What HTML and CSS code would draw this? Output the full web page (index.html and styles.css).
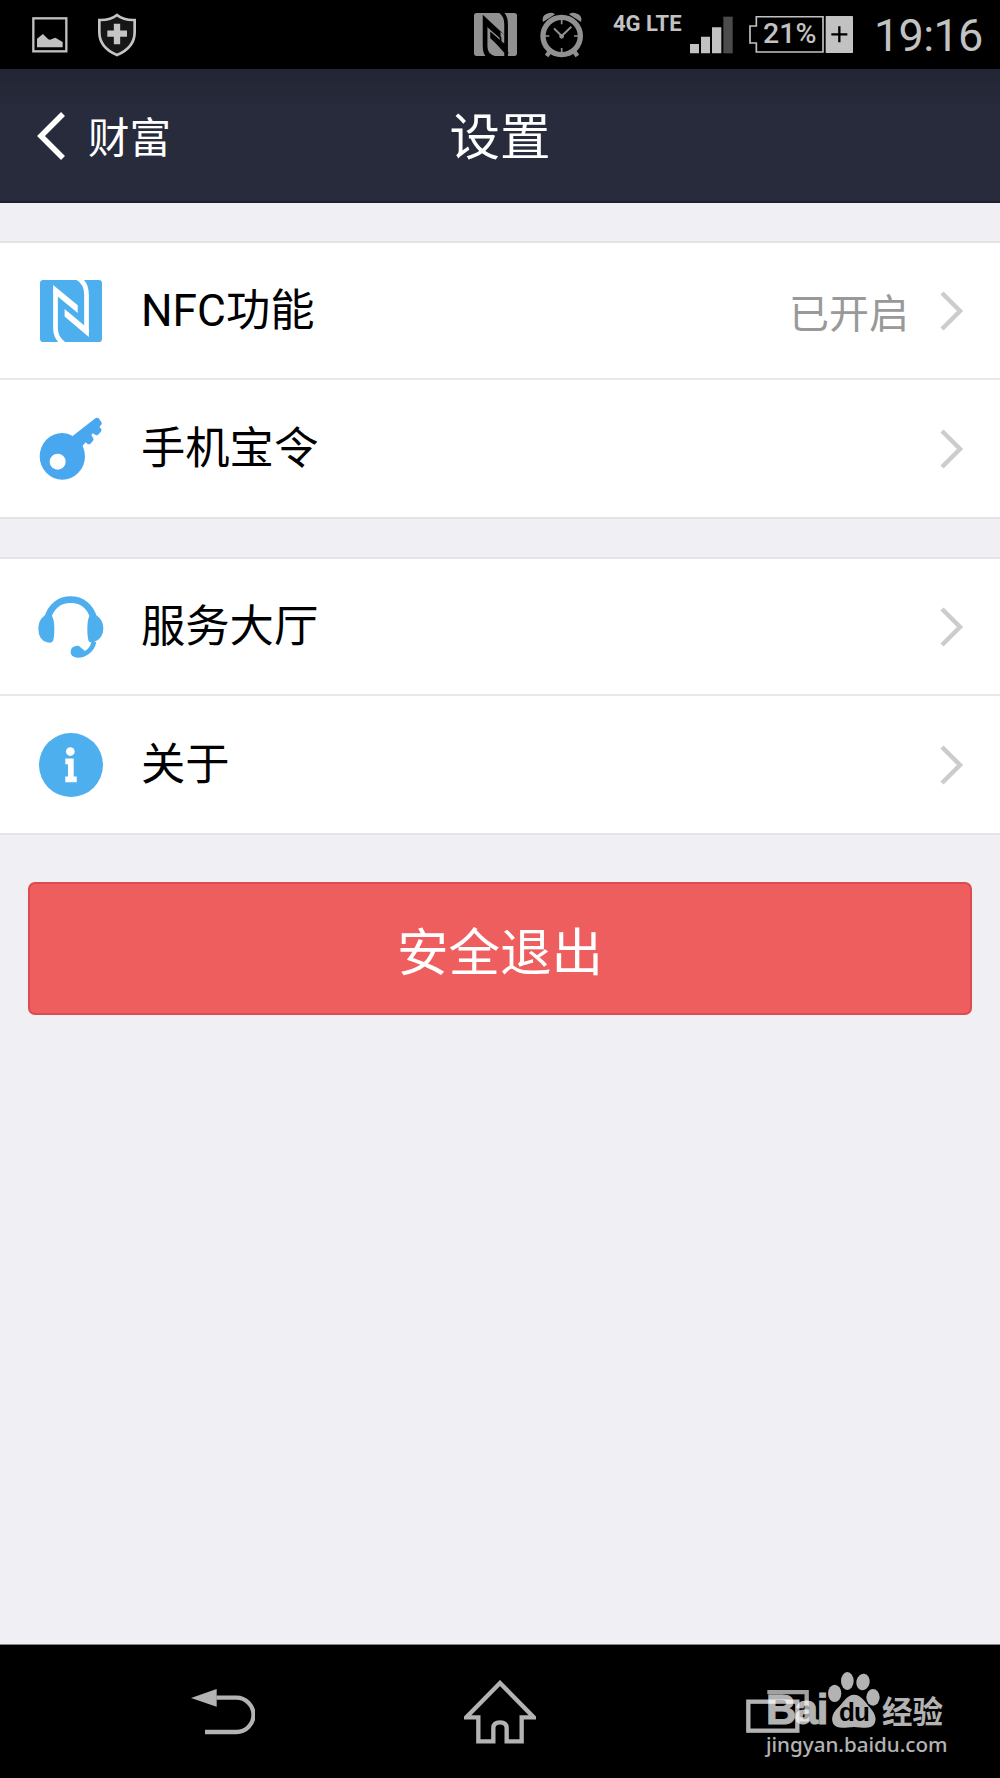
FILE: index.html
```html
<!DOCTYPE html>
<html lang="zh-CN">
<head>
  <meta charset="UTF-8" />
  <meta name="viewport" content="width=device-width, initial-scale=1" />
  <title>设置</title>
  <link rel="stylesheet" href="styles.css">
</head>
<body>

  <div class="status-bar">
    <svg class="icon-picture" width="36" height="36" viewBox="0 0 108 108">
      <rect x="4" y="4" width="99" height="99" fill="none" stroke="#c0c0c0" stroke-width="7"/>
      <path d="M15 91V65L33 51L48 66Q53 71 60 66L70 62L92 75V91Z" fill="#c0c0c0"/>
    </svg>
    <svg class="icon-shield" width="38" height="44" viewBox="0 0 114 132">
      <path d="M57 6Q38 22 4 21V57C4 88 23 112 57 126C91 112 110 88 110 57V21Q76 22 57 6Z" fill="#161616" stroke="#c5c5c5" stroke-width="8"/>
      <path d="M57 32V94M28 62H87" stroke="#c5c5c5" stroke-width="19"/>
    </svg>
    <svg class="icon-nfc-small" width="43" height="43" viewBox="0 0 128 128">
      <path d="M8 0H75Q90 10 90 34V65L26 5V98Q26 118 34 128H8Q0 128 0 120V8Q0 0 8 0Z" fill="#919191"/>
      <path d="M95 0H120Q128 0 128 8V120Q128 128 120 128H101V34Q101 12 91 0Z" fill="#919191"/>
      <path d="M40 39L79 73V56L90 65V91L50 57V74L90 118V128H62Q40 122 40 100Z" fill="#919191"/>
      <path d="M40 39L79 73V88L51 61V74L102 120" fill="none" stroke="#000" stroke-width="5"/>
    </svg>
    <svg class="icon-alarm" width="44" height="46" viewBox="0 0 132 138">
      <path d="M9 30Q3 8 27 3Q40 0 45 7ZM123 30Q129 8 105 3Q92 0 87 7Z" fill="#919191"/>
      <path d="M30 117L20 132M102 117L112 132" stroke="#919191" stroke-width="13"/>
      <circle cx="65" cy="72" r="60" fill="#000"/>
      <circle cx="65" cy="72" r="56" fill="none" stroke="#919191" stroke-width="16"/>
      <path d="M65 24V37M65 108V121M14 72H28M102 72H116" stroke="#919191" stroke-width="5"/>
      <path d="M42 49L65 72L94 44" fill="none" stroke="#919191" stroke-width="6"/>
      <circle cx="65" cy="73" r="7" fill="#919191"/>
    </svg>
    <span class="network">4G LTE</span>
    <svg class="icon-signal" width="43" height="38" viewBox="0 0 129 114">
      <path d="M0 84H27V112H0ZM33 62H60V112H33ZM66 34H94V112H66Z" fill="#c2c2c2"/>
      <rect x="100" y="2" width="28" height="110" fill="#4b4b4b"/>
    </svg>
    <div class="battery">
      <svg width="104" height="37" viewBox="0 0 312 111">
        <path d="M22 2H222V108H22V81H3V30H22Z" fill="none" stroke="#c2c2c2" stroke-width="5"/>
        <rect x="230" y="0" width="82" height="111" rx="2" fill="#c2c2c2"/>
        <path d="M271 31V79M247 55H295" stroke="#000" stroke-width="7"/>
      </svg>
      <span class="battery-level">21%</span>
    </div>
    <span class="clock">19:16</span>
  </div>

  <header class="header">
    <a class="back">
      <svg width="29" height="48" viewBox="0 0 29 48">
        <path d="M27 2L5 24L27 46" fill="none" stroke="#fff" stroke-width="5.6"/>
      </svg>
      <span>财富</span>
    </a>
    <h1>设置</h1>
  </header>

  <main class="content">
    <div class="list">
      <div class="row">
        <div class="row-icon">
          <svg width="62" height="62" viewBox="0 0 184 184">
            <rect width="184" height="184" rx="10" fill="#4dafee"/>
            <path d="M112 -6Q138 8 138 44V156" fill="none" stroke="#fff" stroke-width="14"/>
            <path d="M71 190Q46 172 46 144V30" fill="none" stroke="#fff" stroke-width="14"/>
            <path d="M39 15L112 75V98L39 38ZM73 86L145 146V169L73 108Z" fill="#fff"/>
          </svg>
        </div>
        <span class="label">NFC功能</span>
        <span class="value">已开启</span>
        <svg class="arrow" width="24" height="42" viewBox="0 0 24 42"><path d="M2 3L20 21L2 39"/></svg>
      </div>
      <div class="row">
        <div class="row-icon">
          <svg width="64" height="64" viewBox="0 0 192 192">
            <path d="M101 57L169 4Q174 0 179 4L187 15Q190 19 187 23L181 29L187 37Q189 41 185 45L177 53Q173 56 169 53L161 49L157 55L163 64Q165 69 161 73L154 80Q149 84 145 80L140 76L131 86Q138 103 138 118A68 70 0 1 1 70 48Q87 48 101 57Z" fill="#49a7f0"/>
            <circle cx="56" cy="134" r="24" fill="#fff"/>
          </svg>
        </div>
        <span class="label">手机宝令</span>
        <svg class="arrow" width="24" height="42" viewBox="0 0 24 42"><path d="M2 3L20 21L2 39"/></svg>
      </div>
    </div>

    <div class="list">
      <div class="row">
        <div class="row-icon">
          <svg width="66" height="62" viewBox="0 0 196 186">
            <path d="M27 68C38 30 65 11 97 11C129 11 156 30 167 68" fill="none" stroke="#4dafee" stroke-width="20"/>
            <path d="M20 58L40 58Q48 72 48 98Q48 124 44 135Q40 142 26 139Q0 132 0 97Q0 72 20 58Z" fill="#4dafee"/>
            <path d="M174 58L154 58Q147 72 147 98Q147 124 151 135Q155 142 167 138Q195 128 195 97Q195 72 174 58Z" fill="#4dafee"/>
            <path d="M159 138H174C168 169 142 186 117 185C98 184 93 170 100 157Q106 148 121 149L140 165Q155 157 159 138Z" fill="#4dafee"/>
          </svg>
        </div>
        <span class="label">服务大厅</span>
        <svg class="arrow" width="24" height="42" viewBox="0 0 24 42"><path d="M2 3L20 21L2 39"/></svg>
      </div>
      <div class="row">
        <div class="row-icon">
          <svg width="64" height="64" viewBox="0 0 190 190">
            <circle cx="95" cy="95" r="95" fill="#4dafee"/>
            <circle cx="93" cy="55" r="13" fill="#fff"/>
            <path d="M78 76H103V129H112V146H78V129H86V93H78Z" fill="#fff"/>
          </svg>
        </div>
        <span class="label">关于</span>
        <svg class="arrow" width="24" height="42" viewBox="0 0 24 42"><path d="M2 3L20 21L2 39"/></svg>
      </div>
    </div>

    <button class="btn-logout">安全退出</button>
  </main>

  <nav class="nav-bar">
    <svg class="nav-back" width="64" height="46" viewBox="0 0 192 138">
      <path d="M76 26H136A51 51 0 0 1 136 129H42" fill="none" stroke="#b3b3b3" stroke-width="13"/>
      <path d="M0 27L77 0V53Z" fill="#b3b3b3"/>
    </svg>
    <svg class="nav-home" width="72" height="64" viewBox="0 0 216 192">
      <path d="M108 9L7 112H43V184H88V144Q88 127 108 127Q128 127 128 144V184H173V112H209Z" fill="none" stroke="#b3b3b3" stroke-width="13"/>
    </svg>
    <svg class="nav-recent" width="64" height="43" viewBox="0 0 192 129">
      <path d="M64 6H182V88H160" fill="none" stroke="#a0a0a0" stroke-width="13"/>
      <rect x="7" y="35" width="147" height="87" fill="none" stroke="#b3b3b3" stroke-width="13"/>
    </svg>

    <div class="watermark">
      <div class="watermark-logo">
        <span class="wm-bai">Bai</span>
        <div class="paw">
          <svg width="52" height="57" viewBox="0 0 156 171">
            <ellipse cx="20" cy="64" rx="20" ry="26"/>
            <ellipse cx="58" cy="27" rx="19" ry="27"/>
            <ellipse cx="105" cy="30" rx="20" ry="25" transform="rotate(10 105 30)"/>
            <ellipse cx="135" cy="76" rx="20" ry="25"/>
            <path d="M78 68C98 68 108 86 124 104C140 122 148 139 139 156C129 173 104 166 78 165C52 166 27 173 16 156C7 139 15 120 32 105C48 88 58 68 78 68Z"/>
          </svg>
          <span class="wm-du">du</span>
        </div>
        <span class="wm-cn">经验</span>
      </div>
      <div class="wm-url">jingyan.baidu.com</div>
    </div>
  </nav>

</body>
</html>
```
FILE: styles.css
```css
* {
  box-sizing: border-box;
}

body {
  margin: 0;
  height: 1778px;
  display: flex;
  flex-direction: column;
  background: #efeff4;
  color: #000;
  font-family: Roboto, "Noto Sans CJK SC", sans-serif;
  overflow: hidden;
}

svg {
  display: block;
  flex-shrink: 0;
}

/* status bar */
.status-bar {
  height: 69px;
  flex-shrink: 0;
  display: flex;
  align-items: flex-start;
  padding-left: 32px;
  background: #000;
  color: #c2c2c2;
}

.icon-picture {
  margin-top: 17px;
}

.icon-shield {
  margin: 13px 0 0 30px;
}

.icon-nfc-small {
  margin: 13px 0 0 338px;
}

.icon-alarm {
  margin: 12px 0 0 23px;
}

.network {
  width: 76px;
  margin-left: 29px;
  padding-top: 10px;
  font-size: 22px;
  line-height: 27px;
  font-weight: 700;
  white-space: nowrap;
}

.icon-signal {
  margin: 16px 0 0 1px;
}

.battery {
  position: relative;
  margin: 16px 0 0 16px;
}

.battery-level {
  position: absolute;
  left: 14px;
  top: 1px;
  font-size: 28.5px;
  line-height: 34px;
  font-weight: 500;
}

.clock {
  margin-left: 21px;
  padding-top: 9px;
  font-size: 45px;
  line-height: 54px;
  letter-spacing: -0.7px;
}

/* title bar */
.header {
  height: 134px;
  flex-shrink: 0;
  display: grid;
  grid-template-columns: 1fr auto 1fr;
  align-items: center;
  background: linear-gradient(#222533, #282b3c 40px);
  border-bottom: 2px solid #1f2130;
  color: #fff;
}

.back {
  display: flex;
  align-items: center;
  padding: 2px 0 0 36px;
  font-size: 41.5px;
  line-height: 60px;
}

.back span {
  margin-left: 23px;
  padding-top: 5px;
}

h1 {
  margin: 0;
  padding-top: 6px;
  font-size: 50.5px;
  line-height: 72px;
  font-weight: 400;
}

/* settings */
.content {
  flex: 1;
}

.list {
  margin-top: 38px;
  border: solid #e4e4e7;
  border-width: 2px 0;
  background: #fff;
}

.row {
  height: 135px;
  display: flex;
  align-items: center;
  padding: 0 36px 0 36px;
}

.row + .row {
  height: 139px;
  border-top: 2px solid #e8e8e9;
}

.row-icon {
  width: 69px;
  display: flex;
  justify-content: center;
}

.label {
  margin-left: 36px;
  font-size: 44.3px;
  line-height: 64px;
}

.value {
  margin-left: auto;
  color: #999;
  font-size: 40px;
}

.arrow {
  margin-left: auto;
  fill: none;
  stroke: #ccc;
  stroke-width: 4.5;
}

.value + .arrow {
  margin-left: 31px;
}

.btn-logout {
  display: block;
  width: 944px;
  height: 133px;
  margin: 47px auto 0;
  padding: 0;
  background: #ee5e5e;
  border: 2px solid #dc4b4e;
  border-radius: 7px;
  color: #fff;
  font-family: inherit;
  font-size: 51.5px;
}

/* navigation bar */
.nav-bar {
  position: relative;
  height: 134px;
  flex-shrink: 0;
  display: flex;
  align-items: flex-start;
  background: #000;
  border-top: 1px solid #85858a;
}

.nav-back {
  margin: 44px 0 0 191px;
}

.nav-home {
  margin: 35px 0 0 209px;
}

.nav-recent {
  margin: 45px 0 0 210px;
}

.watermark {
  position: absolute;
  left: 766px;
  top: 27px;
  width: 182px;
  color: #fff;
  opacity: 0.7;
}

.watermark-logo {
  height: 57px;
  display: flex;
  align-items: flex-end;
}

.wm-bai {
  width: 62px;
  height: 40px;
  font-family: "Liberation Sans", sans-serif;
  font-size: 42px;
  line-height: 42px;
  font-weight: 700;
  letter-spacing: -1.5px;
  -webkit-text-stroke: 1px #fff;
}

.paw {
  position: relative;
  fill: #fff;
}

.wm-du {
  position: absolute;
  left: 11px;
  top: 27px;
  color: #000;
  font-family: "Liberation Sans", sans-serif;
  font-size: 26px;
  line-height: 26px;
  font-weight: 700;
  letter-spacing: -1px;
}

.wm-cn {
  height: 34px;
  margin-left: 2px;
  font-family: "Noto Sans CJK SC", sans-serif;
  font-size: 30.5px;
  line-height: 30px;
  font-weight: 700;
}

.wm-url {
  margin-top: 2px;
  font-family: "Noto Sans", sans-serif;
  font-size: 20.6px;
  line-height: 26px;
  font-weight: 500;
  white-space: nowrap;
}
```
